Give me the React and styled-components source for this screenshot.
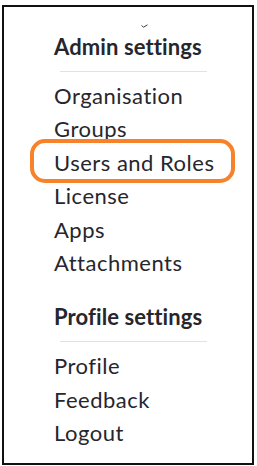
import React from "react"
import styled, { createGlobalStyle, css } from "styled-components"

const GlobalStyle = createGlobalStyle`
    html, body {
        margin: 0;
        padding: 0;
        background: #ffffff;
    }
`

const Frame = styled.div`
    box-sizing: border-box;
    width: 252px;
    height: 460px;
    margin: 5px 0 0 2px;
    border: 2px solid #111111;
    background: #ffffff;
    padding: 23px 0 0 50px;
    font-family: Lato, "Noto Sans", sans-serif;
    color: #26262d;
    position: relative;
`

// stray little check mark above the first heading
const Tick = styled.svg`
    position: absolute;
    left: 137px;
    top: 17px;
    width: 7px;
    height: 4px;
`

const Section = styled.div`
    display: flex;
    flex-direction: column;
    & + & {
        margin-top: 21px;
    }
`

const Title = styled.div`
    font-size: 22px;
    font-weight: 700;
    line-height: 34px;
    letter-spacing: 0.1px;
`

const Divider = styled.div`
    width: 147px;
    height: 1px;
    margin: 7px 0 7px 6px;
    background: #e2e2e2;
`

const Item = styled.div`
    font-size: 22px;
    line-height: 33.4px;
    letter-spacing: 0.5px;
    position: relative;

    ${props =>
        props.highlight &&
        css`
            &:after {
                content: "";
                position: absolute;
                left: -24px;
                top: -7px;
                width: 205px;
                height: 44px;
                box-sizing: border-box;
                border: 4px solid #f7822a;
                border-radius: 15px;
            }
        `}
`

const sections = [
    {
        title: "Admin settings",
        items: ["Organisation", "Groups", "Users and Roles", "License", "Apps", "Attachments"],
    },
    {
        title: "Profile settings",
        items: ["Profile", "Feedback", "Logout"],
    },
]

function App() {
    return (
        <>
            <GlobalStyle />
            <Frame>
                <Tick viewBox="0 0 7 4">
                    <path d="M0.5 1.5 L2.5 3.2 L6.5 0.8" fill="none" stroke="#3a3a48" strokeWidth="1" />
                </Tick>
                {sections.map(section => (
                    <Section key={section.title}>
                        <Title>{section.title}</Title>
                        <Divider />
                        {section.items.map(item => (
                            <Item key={item} highlight={item === "Users and Roles"}>
                                {item}
                            </Item>
                        ))}
                    </Section>
                ))}
            </Frame>
        </>
    )
}

export default App
